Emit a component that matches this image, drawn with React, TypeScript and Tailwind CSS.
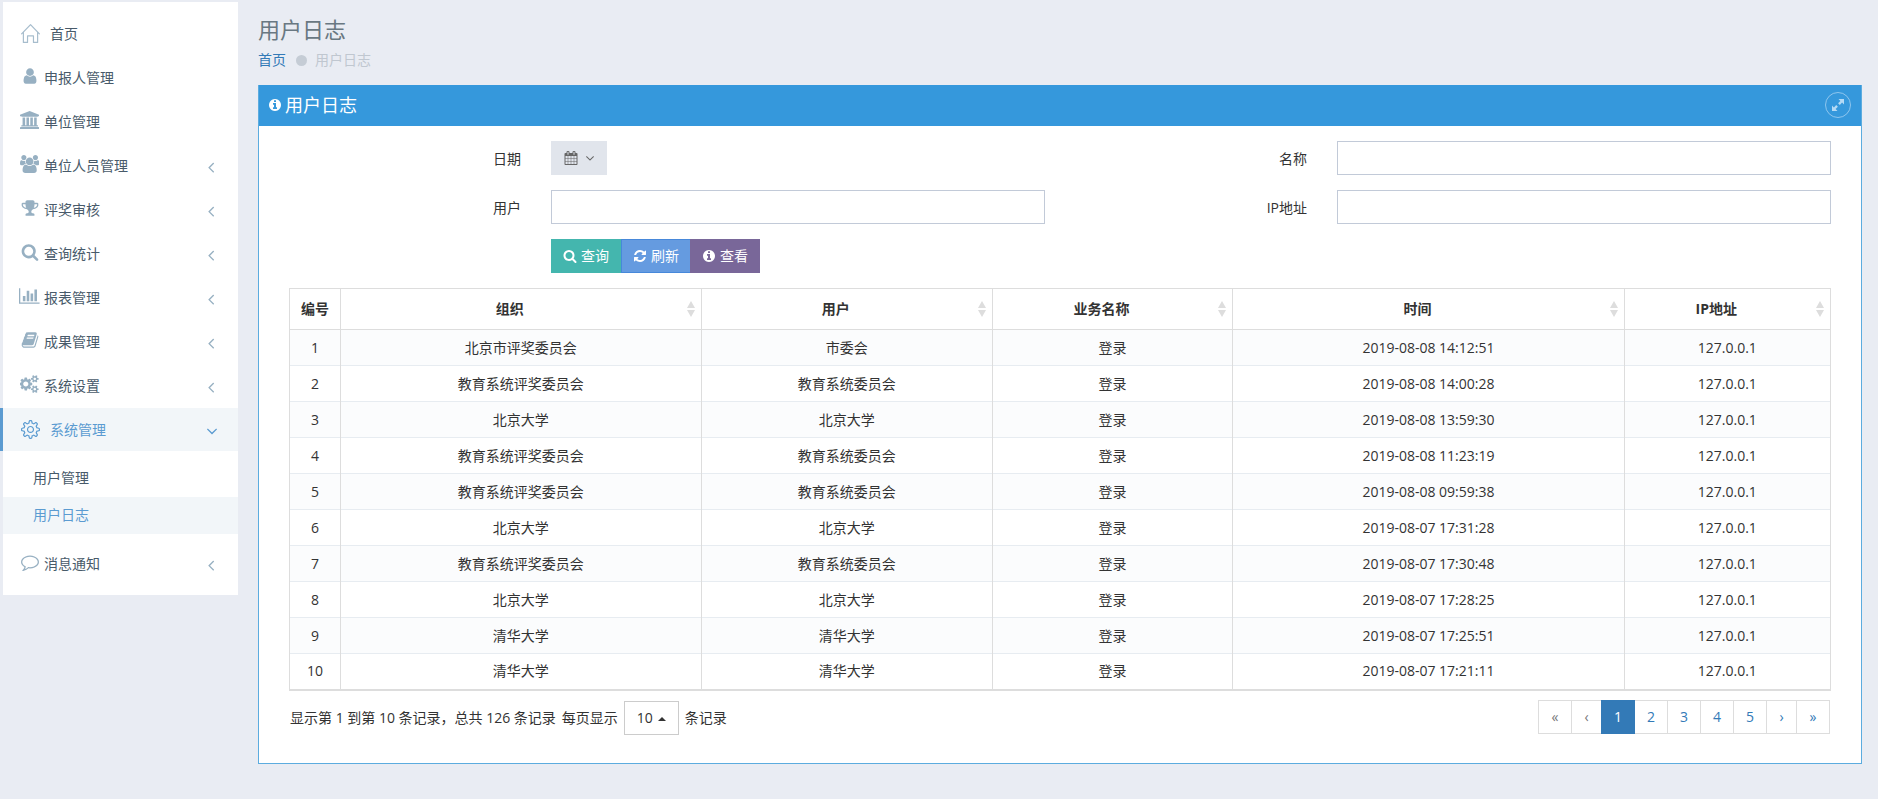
import { useState } from "react"
import { SlHome, SlSettings } from "react-icons/sl"

const ICONS = {
  user: "M1536 1399q0 109-62.5 187t-150.5 78h-854q-88 0-150.5-78t-62.5-187q0-85 8.5-160.5t31.5-152 58.5-131 94-89 134.5-34.5q131 128 313 128t313-128q76 0 134.5 34.5t94 89 58.5 131 31.5 152 8.5 160.5zm-256-887q0 159-112.5 271.5t-271.5 112.5-271.5-112.5-112.5-271.5 112.5-271.5 271.5-112.5 271.5 112.5 112.5 271.5z",
  university: "M896 0l960 384v128h-128q0 26-20.5 45t-48.5 19h-1526q-28 0-48.5-19t-20.5-45h-128v-128zm-704 640h256v768h128v-768h256v768h128v-768h256v768h128v-768h256v768h59q28 0 48.5 19t20.5 45v64h-1664v-64q0-26 20.5-45t48.5-19h59v-768zm1595 960q28 0 48.5 19t20.5 45v128h-1920v-128q0-26 20.5-45t48.5-19h1782z",
  users: "M657 896q-162 5-265 128h-134q-82 0-138-40.5t-56-118.5q0-353 124-353 6 0 43.5 21t97.5 42.5 119 21.5q67 0 133-23-5 37-5 66 0 139 81 256zm1071 637q0 120-73 189.5t-194 69.5h-874q-121 0-194-69.5t-73-189.5q0-53 3.5-103.5t14-109 26.5-108.5 43-97.5 62-81 85.5-53.5 111.5-20q10 0 43 21.5t73 48 107 48 135 21.5 135-21.5 107-48 73-48 43-21.5q61 0 111.5 20t85.5 53.5 62 81 43 97.5 26.5 108.5 14 109 3.5 103.5zm-1024-1277q0 106-75 181t-181 75-181-75-75-181 75-181 181-75 181 75 75 181zm704 384q0 159-112.5 271.5t-271.5 112.5-271.5-112.5-112.5-271.5 112.5-271.5 271.5-112.5 271.5 112.5 112.5 271.5zm576 225q0 78-56 118.5t-138 40.5h-134q-103-123-265-128 81-117 81-256 0-29-5-66 66 23 133 23 59 0 119-21.5t97.5-42.5 43.5-21q124 0 124 353zm-128-609q0 106-75 181t-181 75-181-75-75-181 75-181 181-75 181 75 75 181z",
  trophy: "M522 883q-74-162-74-371h-256v96q0 78 94.5 162t235.5 113zm1078-275v-96h-256q0 209-74 371 141-29 235.5-113t94.5-162zm128-128v128q0 71-41.5 143t-112 130-173 97.5-215.5 44.5q-42 54-95 95-38 34-52.5 72.5t-14.5 89.5q0 54 30.5 91t97.5 37q75 0 133.5 45.5t58.5 114.5v64q0 14-9 23t-23 9h-832q-14 0-23-9t-9-23v-64q0-69 58.5-114.5t133.5-45.5q67 0 97.5-37t30.5-91q0-51-14.5-89.5t-52.5-72.5q-53-41-95-95-113-5-215.5-44.5t-173-97.5-112-130-41.5-143v-128q0-40 28-68t68-28h288v-96q0-66 47-113t113-47h576q66 0 113 47t47 113v96h288q40 0 68 28t28 68z",
  search: "M1216 832q0-185-131.5-316.5t-316.5-131.5-316.5 131.5-131.5 316.5 131.5 316.5 316.5 131.5 316.5-131.5 131.5-316.5zm512 832q0 52-38 90t-90 38q-54 0-90-38l-343-342q-179 124-399 124-143 0-273.5-55.5t-225-150-150-225-55.5-273.5 55.5-273.5 150-225 225-150 273.5-55.5 273.5 55.5 225 150 150 225 55.5 273.5q0 220-124 399l343 343q37 37 37 90z",
  chart: "M640 896v512h-256v-512h256zm384-512v1024h-256v-1024h256zm1024 1152v128h-2048v-1536h128v1408h1920zm-640-896v768h-256v-768h256zm384-384v1152h-256v-1152h256z",
  book: "M1703 478q40 57 18 129l-275 906q-19 64-76.5 107.5t-122.5 43.5h-923q-77 0-148.5-53.5t-99.5-131.5q-24-67-2-127 0-4 3-27t4-37q1-8-3-21.5t-3-19.5q2-11 8-21t16.5-23.5 16.5-23.5q23-38 45-91.5t30-91.5q3-10 .5-30t-.5-28q3-11 17-28t17-23q21-36 42-92t25-90q1-9-2.5-32t.5-28q4-13 22-30.5t22-22.5q19-26 42.5-84.5t27.5-96.5q1-8-3-25.5t-2-26.5q2-8 9-18t18-23 17-21q8-12 16.5-30.5t15-35 16-36 19.5-32 26.5-23.5 36-11.5 47.5 5.5l-1 3q38-9 51-9h761q74 0 114 56t18 130l-274 906q-36 119-71.5 153.5t-128.5 34.5h-869q-27 0-38 15-11 16-1 43 24 70 144 70h923q29 0 56-15.5t35-41.5l300-987q7-22 5-57 38 15 59 43zm-1064 2q-4 13 2 22.5t20 9.5h608q13 0 25.5-9.5t16.5-22.5l21-64q4-13-2-22.5t-20-9.5h-608q-13 0-25.5 9.5t-16.5 22.5zm-83 256q-4 13 2 22.5t20 9.5h608q13 0 25.5-9.5t16.5-22.5l21-64q4-13-2-22.5t-20-9.5h-608q-13 0-25.5 9.5t-16.5 22.5z",
  cogs: "M832 896q0-106-75-181t-181-75-181 75-75 181 75 181 181 75 181-75 75-181zm768 512q0-52-38-90t-90-38-90 38-38 90q0 53 37.5 90.5t90.5 37.5 90.5-37.5 37.5-90.5zm0-1024q0-52-38-90t-90-38-90 38-38 90q0 53 37.5 90.5t90.5 37.5 90.5-37.5 37.5-90.5zm-384 421v185q0 10-7 19.5t-16 10.5l-155 24q-11 35-32 76 34 48 90 115 7 11 7 20 0 12-7 19-23 30-82.5 89.5t-78.5 59.5q-11 0-21-7l-115-90q-37 19-77 31-11 108-23 155-7 24-30 24h-186q-11 0-20-7.5t-10-17.5l-23-153q-34-10-75-31l-118 89q-7 7-20 7-11 0-21-8-144-133-144-160 0-9 7-19 10-14 41-53t47-61q-23-44-35-82l-152-24q-10-1-17-9.5t-7-19.5v-185q0-10 7-19.5t16-10.5l155-24q11-35 32-76-34-48-90-115-7-11-7-20 0-12 7-20 22-30 82-89t79-59q11 0 21 7l115 90q34-18 77-32 11-108 23-154 7-24 30-24h186q11 0 20 7.5t10 17.5l23 153q34 10 75 31l118-89q8-7 20-7 11 0 21 8 144 133 144 160 0 8-7 19-12 16-42 54t-45 60q23 48 34 82l152 23q10 2 17 10.5t7 19.5zm640 533v140q0 16-149 31-12 27-30 52 51 113 51 138 0 4-4 7-122 71-124 71-8 0-46-47t-52-68q-20 2-30 2t-30-2q-14 21-52 68t-46 47q-2 0-124-71-4-3-4-7 0-25 51-138-18-25-30-52-149-15-149-31v-140q0-16 149-31 13-29 30-52-51-113-51-138 0-4 4-7 4-2 35-20t59-34 30-16q8 0 46 46.5t52 67.5q20-2 30-2t30 2q51-71 92-112l6-2q4 0 124 70 4 3 4 7 0 25-51 138 17 23 30 52 149 15 149 31zm0-1024v140q0 16-149 31-12 27-30 52 51 113 51 138 0 4-4 7-122 71-124 71-8 0-46-47t-52-68q-20 2-30 2t-30-2q-14 21-52 68t-46 47q-2 0-124-71-4-3-4-7 0-25 51-138-18-25-30-52-149-15-149-31v-140q0-16 149-31 13-29 30-52-51-113-51-138 0-4 4-7 4-2 35-20t59-34 30-16q8 0 46 46.5t52 67.5q20-2 30-2t30 2q51-71 92-112l6-2q4 0 124 70 4 3 4 7 0 25-51 138 17 23 30 52 149 15 149 31z",
  comment: "M896 384q-204 0-381.5 69.5t-282 187.5-104.5 255q0 112 71.5 213.5t201.5 175.5l87 50-27 96q-24 91-70 172 152-63 275-171l43-38 57 6q69 8 130 8 204 0 381.5-69.5t282-187.5 104.5-255-104.5-255-282-187.5-381.5-69.5zm896 512q0 174-120 321.5t-326 233-450 85.5q-70 0-145-8-198 175-460 242-49 14-114 22h-5q-15 0-27-10.5t-16-27.5v-1q-3-4-.5-12t2-10 4.5-9.5l6-9 7-8.5 8-9q7-8 31-34.5t34.5-38 31-39.5 32.5-51 27-59 26-76q-157-89-247.5-220t-90.5-281q0-174 120-321.5t326-233 450-85.5 450 85.5 326 233 120 321.5z",
  info: "M1152 1376v-160q0-14-9-23t-23-9h-96v-512q0-14-9-23t-23-9h-320q-14 0-23 9t-9 23v160q0 14 9 23t23 9h96v320h-96q-14 0-23 9t-9 23v160q0 14 9 23t23 9h448q14 0 23-9t9-23zm-128-896v-160q0-14-9-23t-23-9h-192q-14 0-23 9t-9 23v160q0 14 9 23t23 9h192q14 0 23-9t9-23zm640 416q0 209-103 385.5t-279.5 279.5-385.5 103-385.5-103-279.5-279.5-103-385.5 103-385.5 279.5-279.5 385.5-103 385.5 103 279.5 279.5 103 385.5z",
  refresh: "M1639 1056q0 5-1 7-64 268-268 434.5t-478 166.5q-146 0-282.5-55t-243.5-157l-129 129q-19 19-45 19t-45-19-19-45v-448q0-26 19-45t45-19h448q26 0 45 19t19 45-19 45l-137 137q71 66 161 102t187 36q134 0 250-65t186-179q11-17 53-117 8-23 30-23h192q13 0 22.5 9.5t9.5 22.5zm25-800v448q0 26-19 45t-45 19h-448q-26 0-45-19t-19-45 19-45l138-138q-148-137-349-137-134 0-250 65t-186 179q-11 17-53 117-8 23-30 23h-199q-13 0-22.5-9.5t-9.5-22.5v-7q65-268 270-434.5t480-166.5q146 0 284 55.5t245 156.5l130-129q19-19 45-19t45 19 19 45z",
  calendar: "M192 1664h288v-288h-288v288zm352 0h320v-288h-320v288zm-352-352h288v-320h-288v320zm352 0h320v-320h-320v320zm-352-384h288v-288h-288v288zm736 736h320v-288h-320v288zm-384-736h320v-288h-320v288zm768 736h288v-288h-288v288zm-384-352h320v-320h-320v320zm-352-864v-288q0-13-9.5-22.5t-22.5-9.5h-64q-13 0-22.5 9.5t-9.5 22.5v288q0 13 9.5 22.5t22.5 9.5h64q13 0 22.5-9.5t9.5-22.5zm736 864h288v-320h-288v320zm-384-384h320v-288h-320v288zm384 0h288v-288h-288v288zm32-480v-288q0-13-9.5-22.5t-22.5-9.5h-64q-13 0-22.5 9.5t-9.5 22.5v288q0 13 9.5 22.5t22.5 9.5h64q13 0 22.5-9.5t9.5-22.5zm384-64v1280q0 52-38 90t-90 38h-1408q-52 0-90-38t-38-90v-1280q0-52 38-90t90-38h128v-96q0-66 47-113t113-47h64q66 0 113 47t47 113v96h384v-96q0-66 47-113t113-47h64q66 0 113 47t47 113v96h128q52 0 90 38t38 90z",
  angleDown: "M1395 736q0 13-10 23l-466 466q-10 10-23 10t-23-10l-466-466q-10-10-10-23t10-23l50-50q10-10 23-10t23 10l393 393 393-393q10-10 23-10t23 10l50 50q10 10 10 23z",
  angleLeft: "M1203 544q0 13-10 23l-393 393 393 393q10 10 10 23t-10 23l-50 50q-10 10-23 10t-23-10l-466-466q-10-10-10-23t10-23l466-466q10-10 23-10t23 10l50 50q10 10 10 23z",
}

type IconName = keyof typeof ICONS

// wide glyphs overflow the 1792 em square
const VIEW_BOX: Partial<Record<IconName, string>> = {
  university: "-64 0 1920 1792",
  users: "64 0 1920 1792",
  cogs: "0 0 1920 1792",
  chart: "0 0 2048 1792",
}

const MENU: { label: string; icon: IconName; arrow?: boolean }[] = [
  { label: "申报人管理", icon: "user" },
  { label: "单位管理", icon: "university" },
  { label: "单位人员管理", icon: "users", arrow: true },
  { label: "评奖审核", icon: "trophy", arrow: true },
  { label: "查询统计", icon: "search", arrow: true },
  { label: "报表管理", icon: "chart", arrow: true },
  { label: "成果管理", icon: "book", arrow: true },
  { label: "系统设置", icon: "cogs", arrow: true },
]

const COLUMNS = [
  { label: "编号", width: "w-[51px]" },
  { label: "组织", width: "w-[23.4%]", sortable: true },
  { label: "用户", width: "w-[18.9%]", sortable: true },
  { label: "业务名称", width: "w-[15.6%]", sortable: true },
  { label: "时间", width: "w-[25.4%]", sortable: true },
  { label: "IP地址", sortable: true },
]

const ROWS = [
  ["北京市评奖委员会", "市委会", "2019-08-08 14:12:51"],
  ["教育系统评奖委员会", "教育系统委员会", "2019-08-08 14:00:28"],
  ["北京大学", "北京大学", "2019-08-08 13:59:30"],
  ["教育系统评奖委员会", "教育系统委员会", "2019-08-08 11:23:19"],
  ["教育系统评奖委员会", "教育系统委员会", "2019-08-08 09:59:38"],
  ["北京大学", "北京大学", "2019-08-07 17:31:28"],
  ["教育系统评奖委员会", "教育系统委员会", "2019-08-07 17:30:48"],
  ["北京大学", "北京大学", "2019-08-07 17:28:25"],
  ["清华大学", "清华大学", "2019-08-07 17:25:51"],
  ["清华大学", "清华大学", "2019-08-07 17:21:11"],
]

function App() {
  const [page, setPage] = useState(1)

  return (
    <div className="flex min-h-screen bg-[#e9ecf3] font-['Open_Sans','Noto_Sans_CJK_SC',sans-serif] text-sm text-[#333]">
      <Sidebar />
      <main className="min-w-0 flex-1 pl-5 pr-4 pt-[11px]">
        <h1 className="text-[22px] leading-9 text-[#697882]">用户日志</h1>
        <nav className="flex h-[26px] items-center">
          <a href="#" className="text-[#337ab7]">首页</a>
          <span className="ml-[10px] mr-2 size-[11px] rounded-full bg-[#c5ccd5]" />
          <span className="text-[#c0c7d0]">用户日志</span>
        </nav>

        <section className="mt-3 border border-t-0 border-[#5cacdf] bg-white">
          <header className="flex h-[41px] items-center justify-between bg-[#3598dc] pb-px pl-[9px] pr-[10px] text-white">
            <h2 className="flex items-center gap-[3px] text-lg">
              <Icon name="info" className="size-[14px]" />
              用户日志
            </h2>
            <button aria-label="全屏" className="flex size-[26px] items-center justify-center rounded-full border border-[#8fc6ee] text-[#b5daf5]">
              <svg viewBox="0 0 12 12" className="size-3" fill="currentColor">
                <path d="M6.500 0H12v5.500l-1.900-1.900-2.300 2.300-1.700-1.700 2.300-2.300zM5.500 12H0V6.500l1.900 1.900 2.300-2.300 1.700 1.700-2.300 2.300z" />
              </svg>
            </button>
          </header>

          <div className="px-[30px] pb-[27px] pt-[15px]">
            <SearchForm />
            <LogTable />

            <div className="mt-[9px] flex items-start justify-between pl-px">
              <div className="flex h-9 items-center gap-[6px]">
                <span>显示第 1 到第 10 条记录，总共 126 条记录</span>
                <span>每页显示</span>
                <span className="relative">
                  <select aria-label="每页显示" defaultValue="10" className="h-[34px] w-[55px] appearance-none border border-[#ccc] bg-white pl-3">
                    <option>10</option>
                    <option>25</option>
                    <option>50</option>
                  </select>
                  <svg viewBox="0 0 8 4" className="pointer-events-none absolute right-[13px] top-4 h-1 w-2" fill="#333">
                    <path d="M0 4l4-4 4 4z" />
                  </svg>
                </span>
                <span>条记录</span>
              </div>
              <Pagination page={page} onChange={setPage} />
            </div>
          </div>
        </section>
      </main>
    </div>
  )
}

function Icon({ name, className }: { name: IconName; className: string }) {
  return (
    <svg viewBox={VIEW_BOX[name] ?? "0 0 1792 1792"} className={`shrink-0 ${className}`} fill="currentColor" aria-hidden="true">
      <path d={ICONS[name]} />
    </svg>
  )
}

function Sidebar() {
  return (
    <aside className="ml-[3px] mt-[2px] w-[235px] shrink-0 self-start bg-white pb-[9px] pt-[10px] text-[#485a6a]">
      <ul>
        <li className="mb-px">
          <a href="#" className="flex h-[43px] items-center pl-[18px]">
            <SlHome className="size-[19px] text-[#a7bdcd]" />
            <span className="ml-[10px]">首页</span>
          </a>
        </li>
        {MENU.map((item) => <MenuItem key={item.label} {...item} />)}
        <li>
          <a href="#" className="-ml-[3px] mb-px flex h-[43px] items-center border-l-[3px] border-[#5b9bd1] bg-[#f2f6f9] pl-[18px] pr-[17px] text-[#5b9bd1]">
            <SlSettings className="size-[19px]" />
            <span className="ml-[10px] flex-1">系统管理</span>
            <span className="pt-[2px]">
              <Icon name="angleDown" className="size-[18px]" />
            </span>
          </a>
          <ul className="py-2">
            <li><a href="#" className="flex h-[37px] items-center pb-px pl-[30px]">用户管理</a></li>
            <li><a href="#" className="flex h-[37px] items-center bg-[#f2f6f9] pb-px pl-[30px] text-[#5b9bd1]">用户日志</a></li>
          </ul>
        </li>
        <MenuItem label="消息通知" icon="comment" arrow />
      </ul>
    </aside>
  )
}

function MenuItem({ label, icon, arrow }: { label: string; icon: IconName; arrow?: boolean }) {
  return (
    <li className="mb-px">
      <a href="#" className="flex h-[43px] items-center pl-4 pr-[18px]">
        <span className="flex w-[21px] justify-center pb-[3px] text-[#97b0c2]">
          <Icon name={icon} className="h-[18px]" />
        </span>
        <span className="ml-1 flex-1">{label}</span>
        {arrow && (
          <span className="pt-[2px] text-[#97b0c2]">
            <Icon name="angleLeft" className="size-[18px]" />
          </span>
        )}
      </a>
    </li>
  )
}

function SearchForm() {
  return (
    <form className="-mx-[15px] grid grid-cols-2 gap-y-[15px]" onSubmit={(e) => e.preventDefault()}>
      <Field label="日期" id="date">
        <button type="button" id="date" className="flex h-[34px] w-14 items-center gap-[5px] bg-[#e1e5ec] pl-[13px] text-[#666]">
          <Icon name="calendar" className="size-[14px]" />
          <Icon name="angleDown" className="size-[14px]" />
        </button>
      </Field>
      <Field label="名称" id="name">
        <TextInput id="name" />
      </Field>
      <Field label="用户" id="user">
        <TextInput id="user" />
      </Field>
      <Field label="IP地址" id="ip">
        <TextInput id="ip" />
      </Field>
      <div className="flex">
        <div className="ml-[33.3333%] flex pl-[15px] text-white">
          <button type="submit" className="flex h-[34px] items-center gap-1 bg-[#44b6ae] px-3">
            <Icon name="search" className="size-[14px]" />
            查询
          </button>
          <button type="button" className="flex h-[34px] items-center gap-1 border border-[#4788da] bg-[#659be0] px-[11px]">
            <Icon name="refresh" className="size-[14px]" />
            刷新
          </button>
          <button type="button" className="-ml-px flex h-[34px] items-center gap-1 bg-[#796799] px-3">
            <Icon name="info" className="size-[14px]" />
            查看
          </button>
        </div>
      </div>
    </form>
  )
}

function Field({ label, id, children }: { label: string; id: string; children: React.ReactNode }) {
  return (
    <div className="grid grid-cols-3 items-center">
      <label htmlFor={id} className="px-[15px] pt-[2px] text-right">{label}</label>
      <div className="col-span-2 px-[15px]">{children}</div>
    </div>
  )
}

function TextInput({ id }: { id: string }) {
  return <input id={id} type="text" className="block h-[34px] w-full border border-[#c2cad8] bg-white px-3" />
}

function LogTable() {
  return (
    <table className="mt-[15px] w-full table-fixed border-collapse border border-b-2 border-[#ddd] text-center">
      <thead>
        <tr className="h-[41px]">
          {COLUMNS.map((col) => (
            <th key={col.label} className={`border border-[#ddd] p-0 font-bold ${col.width ?? ""}`}>
              <div className={`flex items-center ${col.sortable ? "gap-2 pr-[6px]" : ""}`}>
                <span className="flex-1">{col.label}</span>
                {col.sortable && (
                  <svg viewBox="0 0 8 16" className="h-4 w-2" fill="#ddd">
                    <path d="M0 7l4-7 4 7zM0 9h8l-4 7z" />
                  </svg>
                )}
              </div>
            </th>
          ))}
        </tr>
      </thead>
      <tbody>
        {ROWS.map(([org, user, time], i) => (
          <tr key={i} className="h-9 border-t border-[#e7ecf1] odd:bg-[#fbfcfd]">
            <td className="border-x border-[#ddd]">{i + 1}</td>
            <td className="border-x border-[#ddd]">{org}</td>
            <td className="border-x border-[#ddd]">{user}</td>
            <td className="border-x border-[#ddd]">登录</td>
            <td className="border-x border-[#ddd]">{time}</td>
            <td className="border-x border-[#ddd]">127.0.0.1</td>
          </tr>
        ))}
      </tbody>
    </table>
  )
}

function Pagination({ page, onChange }: { page: number; onChange: (page: number) => void }) {
  const arrow = "h-[34px] border border-[#ddd] -ml-px"
  return (
    <div className="mr-px flex text-[#337ab7]">
      <button className={`${arrow} w-[34px] text-[#777]`} onClick={() => onChange(1)}>«</button>
      <button className={`${arrow} w-[31px] text-[#777]`} onClick={() => onChange(Math.max(1, page - 1))}>‹</button>
      {[1, 2, 3, 4, 5].map((n) => (
        <button
          key={n}
          onClick={() => onChange(n)}
          className={`-ml-px h-[34px] w-[34px] border ${
            n === page ? "relative border-[#337ab7] bg-[#337ab7] text-white" : "border-[#ddd]"
          }`}
        >
          {n}
        </button>
      ))}
      <button className={`${arrow} w-[31px]`} onClick={() => onChange(Math.min(5, page + 1))}>›</button>
      <button className={`${arrow} w-[34px]`} onClick={() => onChange(5)}>»</button>
    </div>
  )
}

export default App
